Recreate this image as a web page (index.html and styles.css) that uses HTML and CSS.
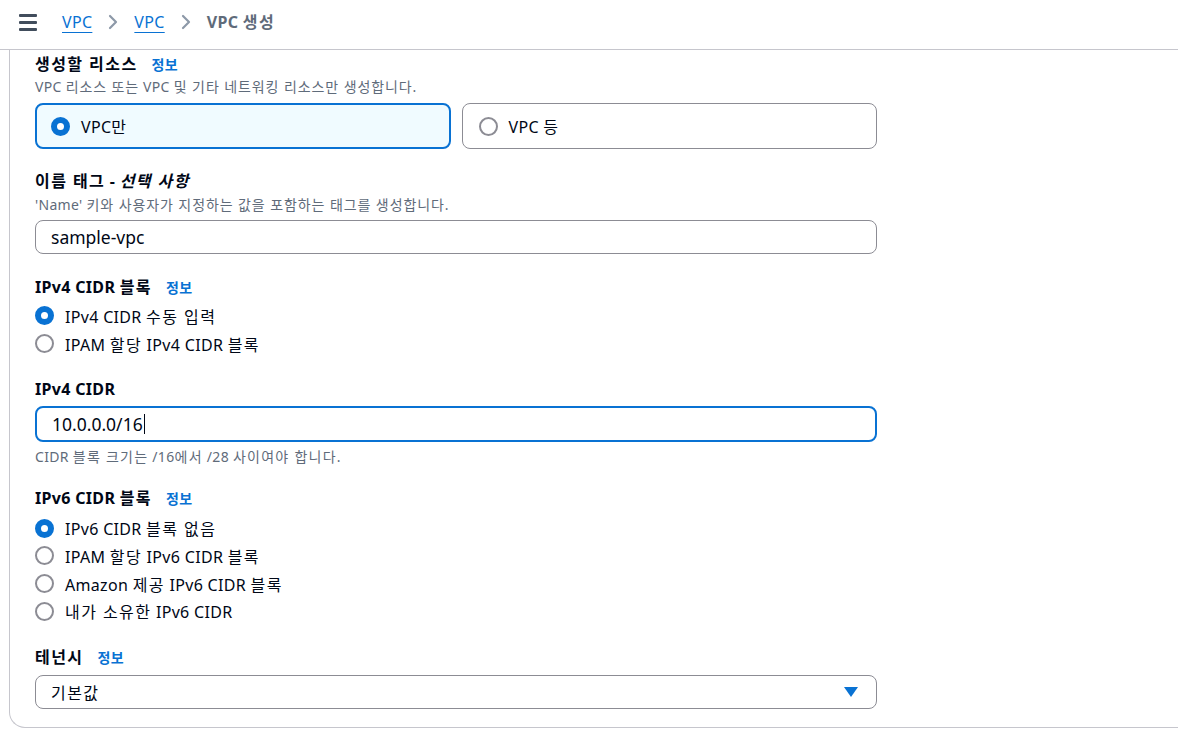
FILE: index.html
```html
<!DOCTYPE html>
<html lang="ko">
<head>
<meta charset="utf-8">
<title>VPC 생성</title>
<link rel="stylesheet" href="styles.css">
</head>
<body>
<header class="topbar">
  <span class="menu" aria-label="메뉴"><i></i><i></i><i></i></span>
  <nav class="crumbs">
    <a class="crumb-link" href="#">VPC</a>
    <svg class="chev" viewBox="0 0 10 16" width="10" height="16"><path d="M2 2l6 6-6 6" fill="none" stroke="#8d99a8" stroke-width="2.2" stroke-linecap="round" stroke-linejoin="round"/></svg>
    <a class="crumb-link" href="#">VPC</a>
    <svg class="chev" viewBox="0 0 10 16" width="10" height="16"><path d="M2 2l6 6-6 6" fill="none" stroke="#8d99a8" stroke-width="2.2" stroke-linecap="round" stroke-linejoin="round"/></svg>
    <span class="crumb-current">VPC <span class="ko">생성</span></span>
  </nav>
</header>

<main class="page">
  <section class="card">
    <div class="field field-first">
      <div class="label"><span class="ko">생성할 리소스</span><a class="info" href="#">정보</a></div>
      <div class="desc">VPC <span class="ko">리소스 또는</span> VPC <span class="ko">및 기타 네트워킹 리소스만 생성합니다</span>.</div>
      <div class="tiles">
        <div class="tile tile-on"><span class="radio radio-on"></span><span>VPC<span class="ko">만</span></span></div>
        <div class="tile"><span class="radio"></span><span>VPC <span class="ko">등</span></span></div>
      </div>
    </div>

    <div class="field field-name">
      <div class="label"><span class="ko">이름 태그</span> - <em class="ko">선택 사항</em></div>
      <div class="desc">'Name' <span class="ko">키와 사용자가 지정하는 값을 포함하는 태그를 생성합니다</span>.</div>
      <div class="input">sample-vpc</div>
    </div>

    <div class="field">
      <div class="label">IPv4 CIDR <span class="ko">블록</span><a class="info" href="#">정보</a></div>
      <ul class="radios">
        <li><span class="radio radio-on"></span><span>IPv4 CIDR <span class="ko">수동 입력</span></span></li>
        <li><span class="radio"></span><span>IPAM <span class="ko">할당</span> IPv4 CIDR <span class="ko">블록</span></span></li>
      </ul>
    </div>

    <div class="field field-tight">
      <div class="label">IPv4 CIDR</div>
      <div class="input input-focus">10.0.0.0/16<span class="caret"></span></div>
      <div class="hint">CIDR <span class="ko">블록 크기는</span> /16<span class="ko">에서</span> /28 <span class="ko">사이여야 합니다</span>.</div>
    </div>

    <div class="field field-v6">
      <div class="label">IPv6 CIDR <span class="ko">블록</span><a class="info" href="#">정보</a></div>
      <ul class="radios">
        <li><span class="radio radio-on"></span><span>IPv6 CIDR <span class="ko">블록 없음</span></span></li>
        <li><span class="radio"></span><span>IPAM <span class="ko">할당</span> IPv6 CIDR <span class="ko">블록</span></span></li>
        <li><span class="radio"></span><span>Amazon <span class="ko">제공</span> IPv6 CIDR <span class="ko">블록</span></span></li>
        <li><span class="radio"></span><span><span class="ko">내가 소유한</span> IPv6 CIDR</span></li>
      </ul>
    </div>

    <div class="field field-last">
      <div class="label"><span class="ko">테넌시</span><a class="info" href="#">정보</a></div>
      <div class="input select"><span class="ko">기본값</span>
        <svg class="caret-down" viewBox="0 0 14 10" width="14" height="10"><path d="M0 0h14L7 10z" fill="#0972d3"/></svg>
      </div>
    </div>
  </section>
</main>
</body>
</html>
```

FILE: styles.css
```css
* { box-sizing: border-box; }

html, body {
  margin: 0;
  padding: 0;
  background: #ffffff;
  overflow: hidden;
}

body {
  font-family: "Noto Sans", "Noto Sans CJK KR", sans-serif;
  color: #000716;
  font-size: 16px;
  letter-spacing: 0.02em;
}

.ko { letter-spacing: 0.09em; }

.topbar {
  height: 50px;
  border-bottom: 1px solid #c6c6cd;
  display: flex;
  align-items: center;
  padding-left: 19px;
  padding-bottom: 5px;
}

.menu {
  display: flex;
  flex-direction: column;
  gap: 4px;
  width: 18px;
}
.menu i {
  display: block;
  height: 3px;
  background: #414d5c;
  border-radius: 1px;
}

.crumbs {
  display: flex;
  align-items: center;
  margin-left: 25px;
  font-size: 16px;
  line-height: 22px;
}
.crumb-link {
  color: #0972d3;
  text-decoration: underline;
  text-underline-offset: 4px;
  text-decoration-thickness: 1px;
}
.chev { margin: 0 16px 0 16px; }
.crumb-current {
  color: #5f6b7a;
  font-weight: 700;
}

.page {
  padding-left: 9px;
}

.card {
  margin-right: -40px;
  border-left: 1px solid #c6c6cd;
  border-bottom: 1px solid #c6c6cd;
  border-bottom-left-radius: 16px;
  padding: 3px 0 18px 25px;
}

.field { width: 842px; margin-top: 22px; }
.field-first { margin-top: 0; }
.field-name { margin-top: 21px; }
.field-tight { margin-top: 21px; }
.field-v6 { margin-top: 22px; }
.field-last { margin-top: 21px; }

.label {
  font-weight: 700;
  font-size: 16px;
  line-height: 22px;
  height: 22px;
}
.label em { font-style: italic; }
.info {
  color: #0972d3;
  font-size: 14px;
  font-weight: 700;
  letter-spacing: 0.02em;
  text-decoration: none;
  margin-left: 14px;
}

.desc {
  color: #5f6b7a;
  font-size: 14px;
  line-height: 16px;
  height: 16px;
  margin-top: 5px;
}
.desc .ko { letter-spacing: 0.065em; }
.field-first .desc { margin-top: 4px; }

.tiles {
  display: grid;
  grid-template-columns: 1fr 1fr;
  gap: 11px;
  margin-top: 8px;
}
.tile {
  height: 46px;
  border: 1px solid #8c8c94;
  border-radius: 8px;
  display: flex;
  align-items: center;
  gap: 11px;
  padding-left: 16px;
  font-size: 16px;
}
.tile-on {
  border: 2px solid #0972d3;
  background: #f0fbff;
  padding-left: 14px;
}

.radio {
  width: 19px;
  height: 19px;
  border-radius: 50%;
  border: 2px solid #8c8c94;
  background: #fff;
  flex: none;
}
.radio-on {
  border: 6px solid #0972d3;
}

.radios {
  list-style: none;
  margin: 4px 0 0;
  padding: 0;
}
.field-v6 .radios { margin-top: 5px; }
.radios li {
  height: 27.7px;
  display: flex;
  align-items: center;
  gap: 11px;
  font-size: 16px;
}

.input {
  margin-top: 6px;
  height: 34px;
  border: 1px solid #8c8c94;
  border-radius: 8px;
  padding-left: 15px;
  display: flex;
  align-items: center;
  font-size: 17.5px;
  letter-spacing: 0;
}
.field-name .input { margin-top: 7px; }
.input-focus {
  height: 36px;
  border: 2px solid #0972d3;
  padding-left: 15px;
}
.caret {
  display: inline-block;
  width: 1px;
  height: 20px;
  background: #000716;
  margin-left: 1px;
}
.hint {
  color: #5f6b7a;
  font-size: 14px;
  line-height: 16px;
  height: 16px;
  margin-top: 7px;
}

.select {
  margin-top: 7px;
  justify-content: space-between;
  padding-right: 18px;
  font-size: 16px;
}
.caret-down { flex: none; }
```
